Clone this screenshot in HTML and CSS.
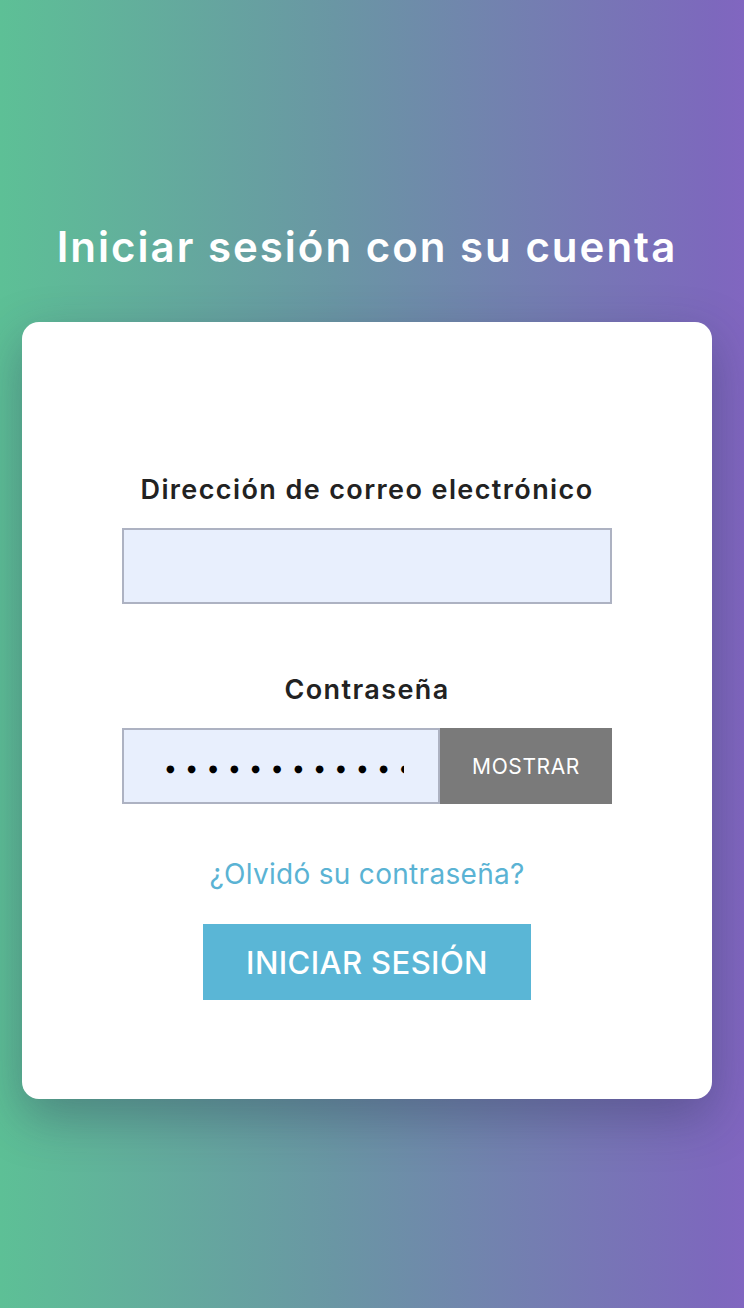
FILE: index.html
```html
<!DOCTYPE html>
<html lang="es">
<head>
<meta charset="utf-8">
<title>Iniciar sesión</title>
<link rel="stylesheet" href="styles.css">
</head>
<body>
<main class="page">
  <h1 class="title">Iniciar sesión con su cuenta</h1>
  <section class="card">
    <form class="form">
      <label class="label" for="email">Dirección de correo electrónico</label>
      <input class="field" id="email" type="email">
      <label class="label label-pass" for="pass">Contraseña</label>
      <div class="pass-row">
        <div class="field pass-field" id="pass"><span class="dots-clip"><span class="dots">●●●●●●●●●●●●●</span></span></div>
        <button type="button" class="show-btn">MOSTRAR</button>
      </div>
      <a class="forgot" href="#">¿Olvidó su contraseña?</a>
      <button type="button" class="submit">INICIAR SESIÓN</button>
    </form>
  </section>
</main>
</body>
</html>
```
FILE: styles.css
```css
html, body {
  margin: 0;
  padding: 0;
}
body {
  width: 744px;
  height: 1308px;
  background: linear-gradient(90deg, #5dc096 0%, #6a96a4 45%, #7d68bd 96%, #8166c0 100%);
  font-family: "Inter", "Noto Sans", sans-serif;
  overflow: hidden;
}
.page {
  display: flex;
  flex-direction: column;
  align-items: center;
  padding: 220px 32px 0 22px;
}
.title {
  margin: 0 0 48px;
  color: #ffffff;
  font-size: 42px;
  font-weight: 600;
  letter-spacing: 2px;
  line-height: 54px;
  white-space: nowrap;
}
.card {
  box-sizing: border-box;
  width: 690px;
  height: 777px;
  background: #ffffff;
  border-radius: 17px;
  box-shadow: 0 18px 50px rgba(40, 40, 80, 0.35);
  padding-top: 148px;
}
.form {
  display: flex;
  flex-direction: column;
  align-items: center;
}
.label {
  color: #222222;
  font-size: 27px;
  font-weight: 600;
  letter-spacing: 1.4px;
  line-height: 40px;
  margin-bottom: 18px;
  white-space: nowrap;
}
.label-pass {
  margin-top: 66px;
}
.field {
  box-sizing: border-box;
  width: 490px;
  height: 76px;
  background: #e8effd;
  border: 2px solid #adb2c2;
  margin: 0;
  padding: 0;
  outline: none;
}
.pass-row {
  display: flex;
  width: 490px;
  height: 76px;
}
.pass-field {
  width: 318px;
  display: flex;
  align-items: center;
  padding-left: 42px;
}
.dots-clip {
  display: block;
  width: 238px;
  overflow: hidden;
  white-space: nowrap;
}
.dots {
  font-family: "DejaVu Sans", sans-serif;
  font-size: 10px;
  letter-spacing: 12.6px;
  color: #000000;
}
.show-btn {
  flex: 1;
  border: 0;
  margin: 0;
  background: #7a7a7a;
  color: #ffffff;
  font-family: "Inter", "Noto Sans", sans-serif;
  font-size: 21px;
  font-weight: 400;
  letter-spacing: 0.6px;
  padding: 0;
}
.forgot {
  margin-top: 50px;
  color: #5ab3d4;
  text-decoration: none;
  font-size: 28px;
  letter-spacing: 0.3px;
  line-height: 40px;
  white-space: nowrap;
}
.submit {
  margin-top: 30px;
  width: 328px;
  height: 76px;
  border: 0;
  background: #5ab6d6;
  color: #ffffff;
  font-family: "Inter", "Noto Sans", sans-serif;
  font-size: 31px;
  font-weight: 500;
  letter-spacing: 0.4px;
  padding: 0;
}
```
